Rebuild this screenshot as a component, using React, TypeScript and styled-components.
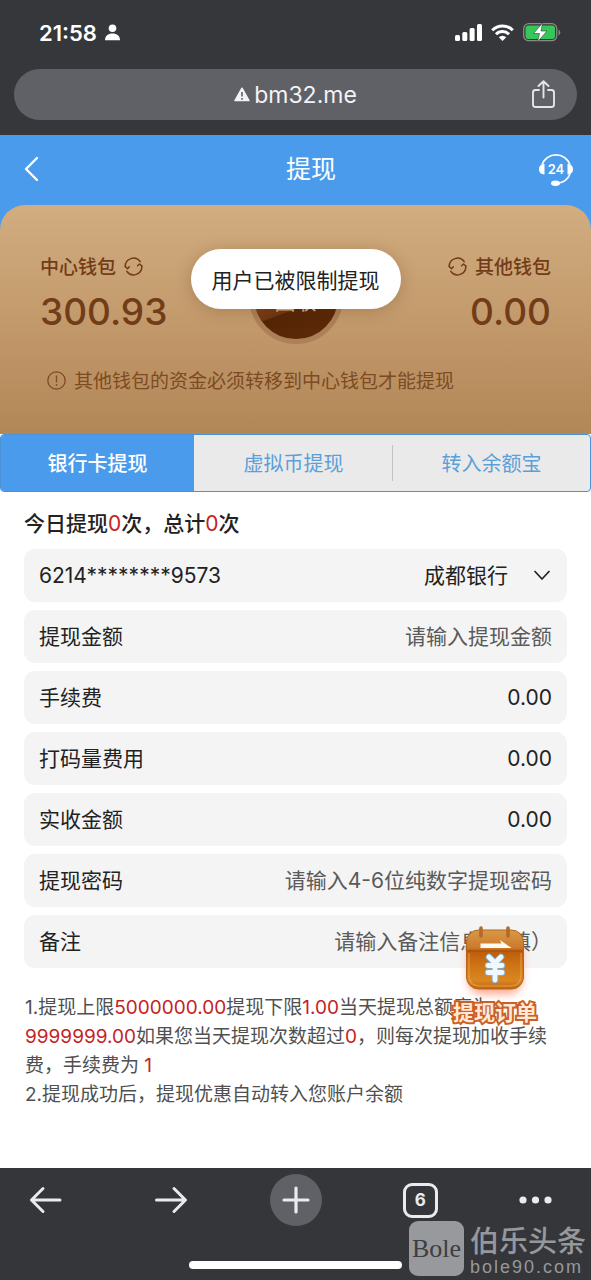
import React from "react";
import styled, { createGlobalStyle } from "styled-components";

const font = `Inter, "Noto Sans CJK SC", sans-serif`;
const cjkFont = `"Noto Sans CJK SC", sans-serif`;

const GlobalStyle = createGlobalStyle`
  *, *::before, *::after { box-sizing: border-box; }
  body { margin: 0; background: #fff; font-family: ${font}; color: #222; }
  button, input, select { font: inherit; color: inherit; border: 0; background: none; padding: 0; margin: 0; border-radius: 0; }
  button { cursor: pointer; }
  h1, h2, p { margin: 0; font-weight: 400; }
  svg { display: block; flex: none; }
`;

const Screen = styled.div`
  min-height: 100vh;
  display: flex;
  flex-direction: column;
`;

const BrowserTop = styled.header`
  background: #35373b;
  color: #fff;
  padding-bottom: 15px;
`;

const StatusBar = styled.div`
  height: 69px;
  padding: 0 30px 4px 39px;
  display: flex;
  align-items: center;
  justify-content: space-between;
`;

const StatusGroup = styled.div<{ $gap: number }>`
  display: flex;
  align-items: center;
  gap: ${(p) => p.$gap}px;
`;

const Clock = styled.time`
  font-size: 22px;
  line-height: 26px;
  font-weight: 600;
`;

const AddressBar = styled.div`
  height: 51px;
  margin: 0 14px;
  padding: 0 20px;
  border-radius: 26px;
  background: #5f6166;
  display: grid;
  grid-template-columns: 26px 1fr 26px;
  align-items: center;
`;

const Address = styled.div`
  grid-column: 2;
  display: flex;
  align-items: center;
  justify-content: center;
  gap: 4px;
  font-size: 23px;
  line-height: 30px;
  color: #f3f3f5;
`;

const TitleBar = styled.div`
  height: 70px;
  padding: 0 17px 2px 23px;
  background: #4a9bec;
  color: #fff;
  display: grid;
  grid-template-columns: 61px 1fr 36px;
  align-items: center;
`;

const Title = styled.h1`
  text-align: center;
  font-size: 25px;
  line-height: 36px;
`;

const IconButton = styled.button`
  display: flex;
  align-items: center;
`;

const CardBackdrop = styled.div`
  background: linear-gradient(#4a9bec 30px, transparent 30px);
`;

const WalletCard = styled.section`
  position: relative;
  height: 229px;
  padding: 46px 40px 0;
  border-radius: 25px 25px 0 0;
  background: linear-gradient(#d1ad80, #c09668 60%, #b18758);
  color: #713c17;
`;

const Wallets = styled.div`
  display: flex;
  justify-content: space-between;
`;

const Wallet = styled.div<{ $end?: boolean }>`
  display: flex;
  flex-direction: column;
  align-items: ${(p) => (p.$end ? "flex-end" : "flex-start")};
`;

const WalletName = styled.h2<{ $end?: boolean }>`
  display: flex;
  flex-direction: ${(p) => (p.$end ? "row-reverse" : "row")};
  align-items: center;
  gap: 8px;
  font-family: ${cjkFont};
  font-size: 19px;
  line-height: 30px;
  font-weight: 500;
`;

const Balance = styled.output`
  font-size: 37px;
  line-height: 46px;
  margin-top: 8px;
  font-weight: 500;
`;

const RecycleButton = styled.button`
  position: absolute;
  top: 45px;
  left: 50%;
  width: 94px;
  height: 94px;
  margin-left: -47px;
  border-radius: 50%;
  border: 5px solid #ad8058;
  background: linear-gradient(160deg, #b0672f, #6e3511 60%, #542505 61%, #5f2b08);
  color: #dcb080;
  font-size: 21px;
  line-height: 30px;
  padding-top: 10px;
`;

const Notice = styled.p`
  display: flex;
  align-items: center;
  gap: 8px;
  margin: 30px 0 0 7px;
  font-family: ${cjkFont};
  font-size: 19px;
  line-height: 30px;
  color: #7d4a22;
`;

const Toast = styled.div`
  position: absolute;
  top: 44px;
  left: 50%;
  transform: translateX(-50%);
  padding: 15px 21px;
  border-radius: 30px;
  background: #fff;
  color: #222;
  font-family: ${cjkFont};
  font-size: 21px;
  line-height: 30px;
  white-space: nowrap;
  box-shadow: 0 2px 16px rgba(90, 50, 10, 0.25);
`;

const Tabs = styled.div`
  height: 58px;
  display: grid;
  grid-template-columns: 193fr 199fr 197fr;
  border: 1px solid #4a93d9;
  border-radius: 4px;
  background: #ebeaeb;
  overflow: hidden;
`;

const Tab = styled.button<{ $divided?: boolean }>`
  position: relative;
  padding-bottom: 2px;
  font-family: ${cjkFont};
  font-size: 20px;
  color: #5b9fd8;
  &[aria-selected="true"] {
    background: #4a9bec;
    color: #fff;
    font-weight: 500;
  }
  &::after {
    content: "";
    display: ${(p) => (p.$divided ? "block" : "none")};
    position: absolute;
    right: 0;
    top: 10px;
    bottom: 10px;
    width: 1px;
    background: #c4c4c6;
  }
`;

const Content = styled.main`
  position: relative;
  padding: 16px 24px 59px;
`;

const Quota = styled.p`
  font-size: 21px;
  line-height: 32px;
  font-weight: 500;
`;

const Red = styled.span`
  color: #c4231f;
`;

const QuotaCount = styled(Red)`
  font-weight: 400;
`;

const Form = styled.form`
  display: grid;
  gap: 8px;
  margin-top: 9px;
`;

const Field = styled.label`
  height: 53px;
  padding: 0 15px;
  border-radius: 11px;
  background: #f4f4f4;
  display: flex;
  align-items: center;
  gap: 12px;
  font-size: 21px;
  line-height: 30px;
  white-space: nowrap;
`;

const FieldInput = styled.input`
  flex: 1;
  min-width: 0;
  height: 100%;
  text-align: right;
  outline: none;
  &::placeholder {
    color: #5a5a5a;
    opacity: 1;
  }
`;

const BankSelect = styled.select`
  flex: 1;
  min-width: 0;
  height: 100%;
  appearance: none;
  text-align: right;
  text-align-last: right;
  outline: none;
  margin-right: 14px;
`;

const Rules = styled.ol`
  list-style: none;
  margin: 25px -8px 0 1px;
  padding: 0;
  font-size: 19px;
  line-height: 29px;
  color: #505050;
`;

const OrdersButton = styled.button`
  position: absolute;
  top: 432px;
  right: 54px;
  display: flex;
  flex-direction: column;
  align-items: center;
`;

const OrdersLabel = styled.span`
  font-size: 21px;
  line-height: 24px;
  font-weight: 700;
  color: #ffe9d6;
  -webkit-text-stroke: 4px #cb5f28;
  paint-order: stroke fill;
`;

const BrowserBottom = styled.footer`
  position: relative;
  height: 112px;
  margin-top: auto;
  background: #34363a;
`;

const Nav = styled.nav`
  display: flex;
  justify-content: space-between;
  padding: 6px 20px 0;
  color: #e9ebf0;
`;

const NavButton = styled.button<{ $filled?: boolean; $start?: boolean }>`
  width: 52px;
  height: 52px;
  border-radius: 50%;
  display: flex;
  align-items: center;
  justify-content: ${(p) => (p.$start ? "flex-start" : "center")};
  background: ${(p) => (p.$filled ? "#5f6166" : "none")};
`;

const TabCount = styled.span`
  width: 35px;
  height: 35px;
  border: 3px solid currentColor;
  border-radius: 9px;
  font-size: 17px;
  line-height: 29px;
  font-weight: 700;
`;

const HomeIndicator = styled.div`
  width: 36%;
  height: 8px;
  margin: 35px auto 0;
  border-radius: 4px;
  background: #fff;
`;

const Watermark = styled.div`
  position: absolute;
  right: 5px;
  bottom: 4px;
  display: flex;
  align-items: center;
  gap: 6px;
  color: #97989c;
`;

const WatermarkLogo = styled.div`
  width: 55px;
  height: 55px;
  border-radius: 9px;
  background: #98999d;
  color: #3c3e42;
  font-family: "Liberation Serif", serif;
  font-size: 26px;
  line-height: 55px;
  text-align: center;
`;

const WatermarkText = styled.div`
  display: flex;
  flex-direction: column;
`;

const WatermarkName = styled.span`
  font-family: ${cjkFont};
  font-size: 29px;
  line-height: 38px;
  font-weight: 500;
`;

const WatermarkSite = styled.span`
  font-family: "Liberation Sans", sans-serif;
  font-size: 18px;
  line-height: 18px;
  letter-spacing: 2px;
`;

const Refresh = () => (
  <svg width="19" height="19" viewBox="0 0 19 19" fill="none" stroke="currentColor" strokeWidth="1.5" strokeLinecap="round" strokeLinejoin="round">
    <path d="M1.200 9.500A8.300 8.300 0 0 1 16.200 4.600M17.800 9a8.300 8.300 0 0 1-15 5.400" />
    <path d="M1.200 9.500l2.300 2.300 1.800-2M17.800 9l-2.300-2-1.900 1.700" />
  </svg>
);

const OrdersIcon = () => (
  <svg width="76" height="77" viewBox="0 0 76 77">
    <defs>
      <linearGradient id="calendar" x1="0" y1="0" x2="0" y2="1">
        <stop offset="0" stopColor="#d99a48" />
        <stop offset=".3" stopColor="#cb7a2a" />
        <stop offset=".36" stopColor="#bd5c0c" />
        <stop offset=".6" stopColor="#cf7414" />
        <stop offset=".85" stopColor="#d98722" />
        <stop offset="1" stopColor="#c06410" />
      </linearGradient>
      <linearGradient id="shine" x1="0" y1="0" x2="1" y2="0">
        <stop offset="0" stopColor="#ffe3a3" stopOpacity="0" />
        <stop offset=".5" stopColor="#fff1c9" />
        <stop offset="1" stopColor="#ffe3a3" stopOpacity="0" />
      </linearGradient>
      <filter id="glow" x="-30%" y="-30%" width="160%" height="160%">
        <feGaussianBlur stdDeviation="4" />
      </filter>
    </defs>
    <rect x="11" y="14" width="54" height="56" rx="14" fill="#ff6a3c" opacity=".6" filter="url(#glow)" />
    <rect x="9.500" y="6" width="57" height="59" rx="12" fill="url(#calendar)" stroke="#b5651c" />
    <path d="M10 27h56" stroke="#a54f0b" strokeWidth="1" />
    <path d="M12 29v22q0 11 11 11h30q11 0 11-11V29" fill="none" stroke="#efae58" strokeWidth="1.500" opacity=".5" />
    <path d="M18 63.500h40" stroke="url(#shine)" strokeWidth="3" />
    <path d="M24 4v8M51 4v8" stroke="#b06a2a" strokeWidth="3.600" strokeLinecap="round" />
    <path d="M23.500 19.500h21l-1.500-3.500 11.500 8h-31z" fill="#fffaf0" />
    <path d="M32 33l6 6 6-6M31 41.500h14M31 48.500h14M38 40v16" fill="none" stroke="#7fb3d6" strokeWidth="6.600" strokeLinecap="round" strokeLinejoin="round" />
    <path d="M32 33l6 6 6-6M31 41.500h14M31 48.500h14M38 40v16" fill="none" stroke="#f1f8fd" strokeWidth="4.800" strokeLinecap="round" strokeLinejoin="round" />
  </svg>
);

const fields = [
  { id: "amount", label: "提现金额", placeholder: "请输入提现金额" },
  { id: "fee", label: "手续费", value: "0.00" },
  { id: "turnover", label: "打码量费用", value: "0.00" },
  { id: "received", label: "实收金额", value: "0.00" },
  { id: "pin", label: "提现密码", placeholder: "请输入4-6位纯数字提现密码", type: "password" },
  { id: "remark", label: "备注", placeholder: "请输入备注信息(选填）" },
];

export default function App() {
  return (
    <Screen>
      <GlobalStyle />
      <BrowserTop>
        <StatusBar>
          <StatusGroup $gap={8}>
            <Clock>21:58</Clock>
            <svg width="15" height="17" viewBox="0 0 15 17" fill="#fff">
              <circle cx="7.500" cy="4.200" r="3.800" />
              <path d="M0 16.200C0 11.800 3 9.500 7.500 9.500S15 11.800 15 16.200z" />
            </svg>
          </StatusGroup>
          <StatusGroup $gap={9}>
            <svg width="27" height="17" viewBox="0 0 27 17" fill="#fff">
              <rect x="0" y="11" width="5" height="6" rx="1.500" />
              <rect x="7.300" y="8" width="5" height="9" rx="1.500" />
              <rect x="14.600" y="4" width="5" height="13" rx="1.500" />
              <rect x="22" y="0" width="5" height="17" rx="1.500" />
            </svg>
            <svg width="23" height="17" viewBox="0 0 23 17" fill="none" stroke="#fff" strokeWidth="3">
              <path d="M1.200 6.200a14.600 14.600 0 0 1 20.600 0" />
              <path d="M5 10.300a9.200 9.200 0 0 1 13 0" />
              <path d="M11.500 17l-3.700-3.700a5.200 5.200 0 0 1 7.400 0z" fill="#fff" stroke="none" />
            </svg>
            <svg width="38" height="19" viewBox="0 0 38 19">
              <rect x=".7" y=".7" width="33" height="17" rx="5" fill="none" stroke="#8b8b86" strokeWidth="1.300" />
              <rect x="2.500" y="2.500" width="29.500" height="13.500" rx="3" fill="#35c759" />
              <path d="M35.500 6.500v6q1.800-1 1.800-3t-1.800-3z" fill="#85888c" />
              <path d="M19.500 0L10.500 10.500h6L14.500 19l9.500-11h-6z" fill="#fff" stroke="#35373b" strokeWidth=".6" />
            </svg>
          </StatusGroup>
        </StatusBar>
        <AddressBar>
          <Address>
            <svg width="16" height="15" viewBox="0 0 16 15">
              <path d="M8 1.200L15 13.500H1z" fill="#f3f3f5" stroke="#f3f3f5" strokeWidth="1.500" strokeLinejoin="round" />
              <path d="M8 5v4.500M8 11v1.700" stroke="#5f6166" strokeWidth="1.600" />
            </svg>
            bm32.me
          </Address>
          <IconButton aria-label="分享">
            <svg width="26" height="29" viewBox="0 0 26 29" fill="none" stroke="#e4e5e8" strokeWidth="1.900" strokeLinecap="round" strokeLinejoin="round">
              <path d="M8 10H4.500Q2 10 2 12.500v12Q2 27 4.500 27h16q2.500 0 2.500-2.500v-12Q23 10 20.500 10H17" />
              <path d="M12.500 17.500V1.500M7.500 6l5-4.800 5 4.800" />
            </svg>
          </IconButton>
        </AddressBar>
      </BrowserTop>

      <TitleBar>
        <IconButton aria-label="返回">
          <svg width="18" height="26" viewBox="0 0 18 26" fill="none" stroke="#fff" strokeWidth="2.400" strokeLinecap="round" strokeLinejoin="round">
            <path d="M14 2L3 13l11 11" />
          </svg>
        </IconButton>
        <Title>提现</Title>
        <IconButton aria-label="24小时客服">
          <svg width="36" height="36" viewBox="0 0 36 36" fill="none" stroke="#fff" strokeWidth="1.700">
            <path d="M4 13.500a15 15 0 0 1 28 0M32 23q-3 8-12.500 9.200" />
            <path d="M6.500 13v10.500C3 23.500 1 21.500 1 18.300S3 13 6.500 13zM29.500 13v10.500c3.500 0 5.500-2 5.500-5.200S33 13 29.500 13z" fill="#fff" stroke="none" />
            <ellipse cx="17.500" cy="32.200" rx="4.500" ry="2.700" fill="#fff" stroke="none" />
            <text x="18" y="22.500" textAnchor="middle" fontSize="13" fontWeight="600" fontFamily="Inter, sans-serif" fill="#fff" stroke="none">24</text>
          </svg>
        </IconButton>
      </TitleBar>

      <CardBackdrop>
        <WalletCard>
          <Wallets>
            <Wallet>
              <WalletName>中心钱包<IconButton aria-label="刷新中心钱包"><Refresh /></IconButton></WalletName>
              <Balance>300.93</Balance>
            </Wallet>
            <Wallet $end>
              <WalletName $end>其他钱包<IconButton aria-label="刷新其他钱包"><Refresh /></IconButton></WalletName>
              <Balance>0.00</Balance>
            </Wallet>
          </Wallets>
          <RecycleButton>回收</RecycleButton>
          <Notice>
            <svg width="19" height="19" viewBox="0 0 19 19" fill="none" stroke="currentColor" strokeWidth="1.300">
              <circle cx="9.500" cy="9.500" r="8.700" />
              <path d="M9.500 4.500v6.700M9.500 13v1.700" />
            </svg>
            其他钱包的资金必须转移到中心钱包才能提现
          </Notice>
          <Toast role="status">用户已被限制提现</Toast>
        </WalletCard>
      </CardBackdrop>

      <Tabs role="tablist">
        <Tab role="tab" aria-selected="true">银行卡提现</Tab>
        <Tab role="tab" aria-selected="false" $divided>虚拟币提现</Tab>
        <Tab role="tab" aria-selected="false">转入余额宝</Tab>
      </Tabs>

      <Content>
        <Quota>今日提现<QuotaCount>0</QuotaCount>次，总计<QuotaCount>0</QuotaCount>次</Quota>
        <Form>
          <Field htmlFor="bank">
            6214********9573
            <BankSelect id="bank" defaultValue="成都银行">
              <option>成都银行</option>
            </BankSelect>
            <svg width="18" height="12" viewBox="0 0 18 12" fill="none" stroke="#222" strokeWidth="1.700" strokeLinecap="round" strokeLinejoin="round">
              <path d="M1 1.500L8 9 15 1.500" />
            </svg>
          </Field>
          {fields.map((f) => (
            <Field key={f.id} htmlFor={f.id}>
              {f.label}
              <FieldInput id={f.id} type={f.type ?? "text"} placeholder={f.placeholder} defaultValue={f.value} readOnly={f.value !== undefined} />
            </Field>
          ))}
        </Form>
        <Rules>
          <li>
            1.提现上限<Red>5000000.00</Red>提现下限<Red>1.00</Red>当天提现总额度为<Red>9999999.00</Red>如果您当天提现次数超过<Red>0</Red>，则每次提现加收手续费，手续费为 <Red>1</Red>
          </li>
          <li>2.提现成功后，提现优惠自动转入您账户余额</li>
        </Rules>
        <OrdersButton>
          <OrdersIcon />
          <OrdersLabel>提现订单</OrdersLabel>
        </OrdersButton>
      </Content>

      <BrowserBottom>
        <Nav>
          <NavButton aria-label="后退">
            <svg width="34" height="28" viewBox="0 0 34 28" fill="none" stroke="currentColor" strokeWidth="3" strokeLinecap="round" strokeLinejoin="round">
              <path d="M31 14H2.500M14 2.500L2.500 14 14 25.500" />
            </svg>
          </NavButton>
          <NavButton aria-label="前进">
            <svg width="34" height="28" viewBox="0 0 34 28" fill="none" stroke="currentColor" strokeWidth="3" strokeLinecap="round" strokeLinejoin="round">
              <path d="M2.500 14H31M20 2.500L31.500 14 20 25.500" />
            </svg>
          </NavButton>
          <NavButton aria-label="新标签页" $filled>
            <svg width="28" height="28" viewBox="0 0 28 28" fill="none" stroke="currentColor" strokeWidth="3.200" strokeLinecap="round">
              <path d="M14 2v24M2 14h24" />
            </svg>
          </NavButton>
          <NavButton aria-label="标签页">
            <TabCount>6</TabCount>
          </NavButton>
          <NavButton aria-label="更多" $start>
            <svg width="33" height="8" viewBox="0 0 33 8" fill="currentColor">
              <circle cx="4" cy="4" r="3.600" />
              <circle cx="16.500" cy="4" r="3.600" />
              <circle cx="29" cy="4" r="3.600" />
            </svg>
          </NavButton>
        </Nav>
        <HomeIndicator />
        <Watermark>
          <WatermarkLogo>Bole</WatermarkLogo>
          <WatermarkText>
            <WatermarkName>伯乐头条</WatermarkName>
            <WatermarkSite>bole90.com</WatermarkSite>
          </WatermarkText>
        </Watermark>
      </BrowserBottom>
    </Screen>
  );
}
